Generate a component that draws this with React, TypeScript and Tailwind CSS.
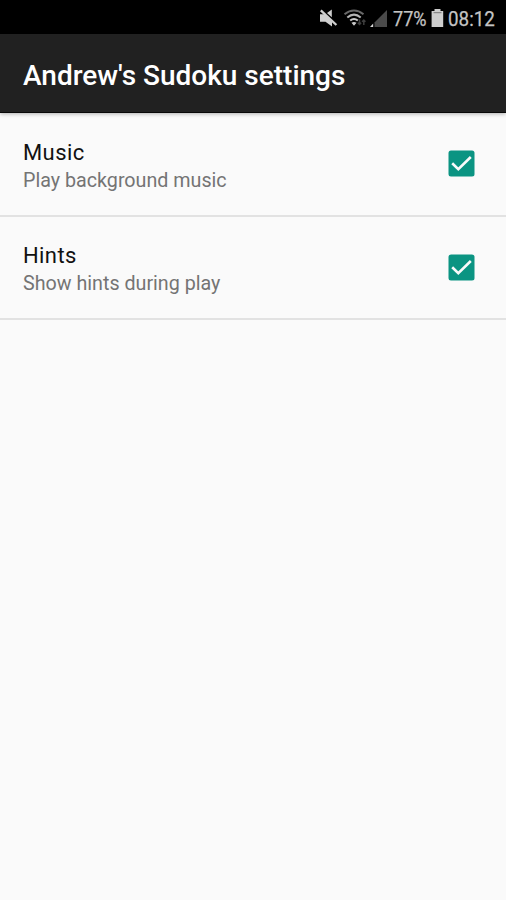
import { useState } from "react";

function StatusBar() {
  return (
    <div className="flex h-[34px] items-start bg-black pl-[319px] text-[#c4c4c4]">
      <svg className="mt-[8px] h-[20px] w-[20px] shrink-0" viewBox="0 0 20 20" fill="#cfcfcf">
        <path d="M1 6.2h4.2L13 13.6v5L6.5 13.7H1z" />
        <path d="M8 4.9 12.8 1.5v7.8z" />
        <path d="M1.8 2.3 17.4 17" stroke="#cfcfcf" strokeWidth="2.3" />
      </svg>
      <svg className="ml-[4px] mt-[8px] h-[20px] w-[24px] shrink-0" viewBox="0 0 24 20" fill="none" strokeWidth="2">
        <path d="M1.5 6.2Q11 -1.2 20.5 6.2" stroke="#686868" />
        <path d="M4.3 9.5Q11 3.8 17.7 9.5" stroke="#b5b5b5" />
        <path d="M7.2 12.6Q11 9.3 14.8 12.6" stroke="#c9c9c9" />
        <path d="M9.4 15Q11 14 12.6 15L11 16.8z" fill="#c9c9c9" stroke="#c9c9c9" strokeWidth="1.2" />
        <path d="M16.5 11.5v5m-1.7-1.8 1.7 1.8 1.6-1.8M20.8 17v-5m-1.7 1.8 1.7-1.8 1.6 1.8" stroke="#3d3d3d" strokeWidth="1.5" />
      </svg>
      <svg className="ml-[2px] mt-[8px] h-[20px] w-[20px] shrink-0" viewBox="0 0 20 20">
        <path d="M18 2v17H5.5V14.6z" fill="#4b4b4b" />
        <path d="M1 19 4.2 15.6V19z" fill="#d8d8d8" />
      </svg>
      <div className="ml-[4px] w-[34px] shrink-0">
        <span className="mt-[7px] block origin-left scale-x-[0.86] whitespace-nowrap text-[21px] leading-[24px] [-webkit-text-stroke:0.25px_#c4c4c4]">77%</span>
      </div>
      <svg className="ml-[4px] mt-[8px] h-[20px] w-[13px] shrink-0" viewBox="0 0 13 20">
        <path d="M3.5 1h6v2h2.7v16H.6V3h2.9z" fill="#cecece" />
        <path d="M2.5 4.7h8" stroke="#777" strokeWidth="1" />
      </svg>
      <div className="ml-[4px] w-[48px] shrink-0">
        <span className="mt-[7px] block origin-left scale-x-[0.895] whitespace-nowrap text-[21px] leading-[24px] [-webkit-text-stroke:0.25px_#c4c4c4]">08:12</span>
      </div>
    </div>
  );
}

interface SettingProps {
  title: string;
  summary: string;
}

function Setting({ title, summary }: SettingProps) {
  const [checked, setChecked] = useState(true);
  return (
    <button
      type="button"
      role="checkbox"
      aria-checked={checked}
      onClick={() => setChecked(!checked)}
      className="flex h-[103.5px] w-full items-center justify-between border-b-2 border-[#e2e2e2] pl-[23px] pr-[31px] text-left"
    >
      <span className="flex flex-col pt-[5px]">
        <span className="text-[22px] leading-[29px] tracking-[0.4px] text-[#111]">{title}</span>
        <span className="text-[19.7px] leading-[28px] text-[#747474]">{summary}</span>
      </span>
      <svg className="h-[27px] w-[27px] shrink-0" viewBox="0 0 27 27">
        <rect x="0.5" y="0.5" width="26" height="26" rx="2.5" fill={checked ? "#0b9482" : "#8a8a8a"} />
        {checked && <path d="m4.2 13.2 6.1 5.9L22.8 7" fill="none" stroke="#fafafa" strokeWidth="2.6" />}
      </svg>
    </button>
  );
}

export default function App() {
  return (
    <div className="flex h-[900px] w-[506px] flex-col overflow-hidden bg-[#fafafa] font-['Roboto',sans-serif]">
      <StatusBar />
      <header className="flex h-[79px] items-center border-b border-[#080808] bg-[#212121] pl-[23px] pt-[5px] shadow-[0_1px_4px_rgba(0,0,0,0.3)]">
        <h1 className="whitespace-nowrap text-[28px] font-medium leading-[34px] text-white">Andrew's Sudoku settings</h1>
      </header>
      <main className="flex flex-col">
        <Setting title="Music" summary="Play background music" />
        <Setting title="Hints" summary="Show hints during play" />
      </main>
    </div>
  );
}
